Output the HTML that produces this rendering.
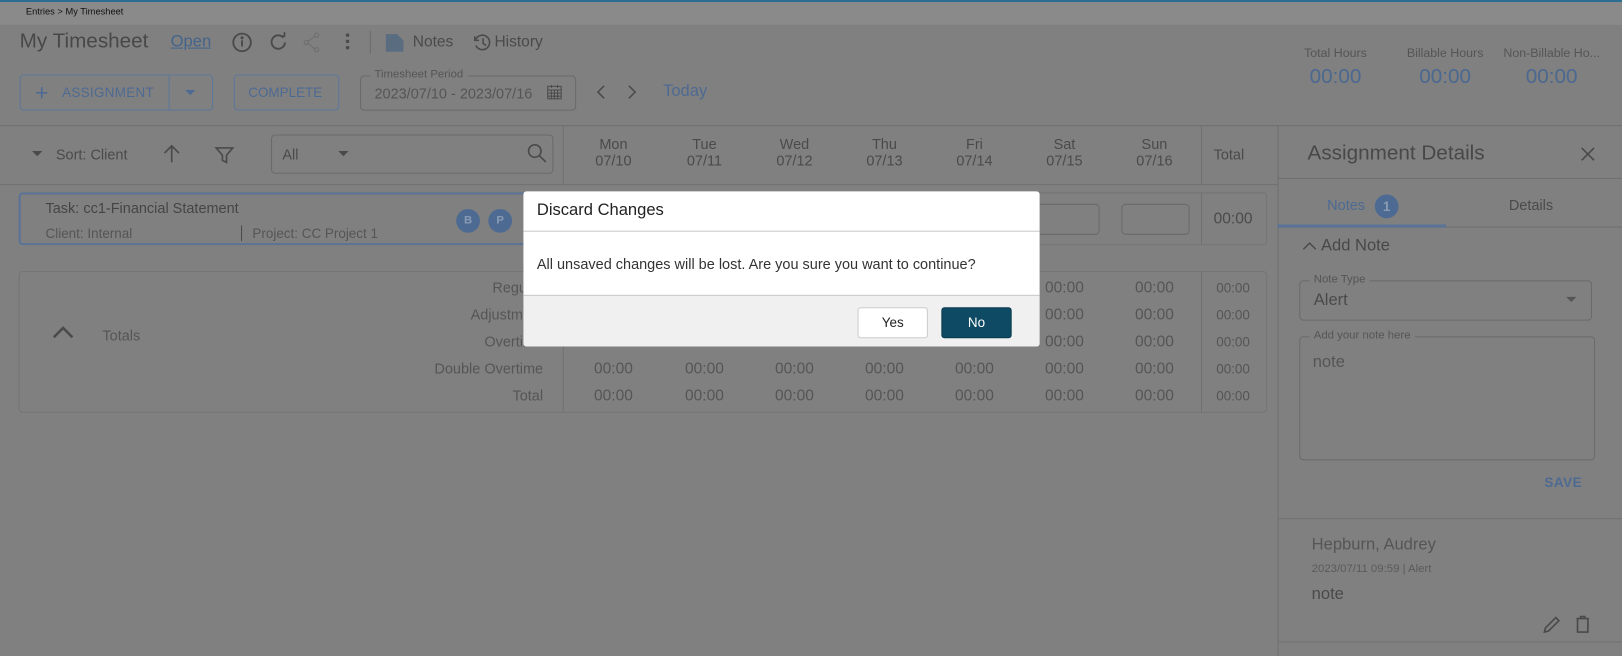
<!DOCTYPE html>
<html><head><meta charset="utf-8"><style>
html,body{margin:0;padding:0;width:1622px;height:656px;overflow:hidden;background:#808080}
#w{position:absolute;left:0;top:0;width:1568px;height:634px;transform:scale(1.03444);transform-origin:0 0;font-family:"Liberation Sans",sans-serif;color:#454545}
.a{position:absolute;white-space:nowrap}
.c{transform:translateX(-50%);text-align:center}
.r{transform:translateX(-100%)}
.box{position:absolute;border:1px solid #6a6a6a;border-radius:4px;box-sizing:border-box}
.hl{position:absolute;height:1px;background:#707070}
.vl{position:absolute;width:1px;background:#707070}
.d{font-size:14px;color:#4a4a4a}
.v{font-size:15px;color:#555}
</style></head><body><div id="w">
<div class="a" style="left:0;top:0;width:1568px;height:2px;background:#2b6e92"></div>
<div class="a" style="left:0;top:2px;width:1568px;height:22px;background:#8a8a8a"></div>
<div class="a" style="left:25px;top:6px;font-size:9px;color:#111">Entries &gt; My Timesheet</div>

<div class="a" style="left:19px;top:29px;font-size:20px;color:#484848">My Timesheet</div>
<div class="a" style="left:165px;top:32px;font-size:16px;color:#44648c;text-decoration:underline">Open</div>
<svg class="a" style="left:222px;top:30px" width="300" height="22" viewBox="0 0 300 22" fill="none" stroke="#4a4a4a" stroke-width="1.8">
<circle cx="12" cy="11" r="8.5"/><line x1="12" y1="9" x2="12" y2="15"/><circle cx="12" cy="6.5" r=".6" fill="#4a4a4a"/>
<path d="M52 6.5A6.5 6.5 0 1 0 53.5 11"/><path d="M49 5h4v-4" stroke-width="1.6"/>
<g stroke="#707070" stroke-width="1.2"><circle cx="84" cy="4" r="2"/><circle cx="74" cy="11" r="2"/><circle cx="84" cy="18" r="2"/><path d="M76 10l6-5M76 12l6 5"/></g>
<g fill="#4a4a4a" stroke="none"><circle cx="114" cy="4" r="1.7"/><circle cx="114" cy="10" r="1.7"/><circle cx="114" cy="16" r="1.7"/></g>
<line x1="136" y1="0" x2="136" y2="22" stroke="#6a6a6a" stroke-width="1"/>
<path d="M151 3h11l6 6v11h-17z" fill="#5a6c80" stroke="none"/>
<path d="M238 8a7 7 0 1 1 0 6M237 5v4h4M245 7v5l3 2" stroke-width="1.5"/>
</svg>
<div class="a" style="left:399px;top:32px;font-size:15px;color:#4a4a4a">Notes</div>
<div class="a" style="left:478px;top:32px;font-size:15px;color:#4a4a4a">History</div>

<div class="box" style="left:19px;top:72px;width:187px;height:35px;border-color:#5c779b"></div>
<div class="vl" style="left:163px;top:73px;height:33px;background:#5c779b"></div>
<div class="a" style="left:34px;top:77px;font-size:22px;color:#4d6a92">+</div>
<div class="a" style="left:60px;top:82px;font-size:13px;color:#4d6a92;letter-spacing:.3px">ASSIGNMENT</div>
<div class="a" style="left:179px;top:87px;border:5px solid transparent;border-top:5px solid #4d6a92"></div>
<div class="box" style="left:226px;top:72px;width:102px;height:35px;border-color:#5c779b"></div>
<div class="a" style="left:240px;top:82px;font-size:13px;color:#4d6a92">COMPLETE</div>
<div class="box" style="left:348px;top:73px;width:209px;height:34px"></div>
<div class="a" style="left:358px;top:66px;font-size:11px;color:#555;background:#808080;padding:0 4px">Timesheet Period</div>
<div class="a" style="left:362px;top:82px;font-size:14px;color:#555">2023/07/10 - 2023/07/16</div>
<svg class="a" style="left:528px;top:81px" width="16" height="16" fill="none" stroke="#4a4a4a" stroke-width="1"><rect x="1.5" y="2.5" width="13" height="12"/><path d="M1.5 6h13M1.5 9h13M1.5 12h13M5 6v9M8 6v9M11 6v9M5 1v3M11 1v3"/></svg>
<svg class="a" style="left:575px;top:81px" width="45" height="16" fill="none" stroke="#4a4a4a" stroke-width="1.5"><path d="M9 2l-6 6 6 6M33 2l6 6-6 6"/></svg>
<div class="a" style="left:641px;top:80px;font-size:16px;color:#4d6a92">Today</div>

<div class="a c" style="left:1291px;top:44px;font-size:12px;color:#555">Total Hours</div>
<div class="a c" style="left:1397px;top:44px;font-size:12px;color:#555">Billable Hours</div>
<div class="a c" style="left:1500px;top:44px;font-size:12px;color:#555">Non-Billable Ho...</div>
<div class="a c" style="left:1291px;top:63px;font-size:20px;color:#4a6890">00:00</div>
<div class="a c" style="left:1397px;top:63px;font-size:20px;color:#4a6890">00:00</div>
<div class="a c" style="left:1500px;top:63px;font-size:20px;color:#4a6890">00:00</div>

<div class="hl" style="left:0;top:121px;width:1568px"></div>
<div class="hl" style="left:0;top:178px;width:1235px"></div>
<div class="vl" style="left:1235px;top:121px;height:513px"></div>
<div class="vl" style="left:544px;top:121px;height:57px"></div>
<div class="vl" style="left:1161px;top:121px;height:57px"></div>
<div class="a" style="left:31px;top:146px;border:5px solid transparent;border-top:5px solid #4a4a4a"></div>
<div class="a" style="left:54px;top:141px;font-size:14px;color:#4a4a4a">Sort: Client</div>
<svg class="a" style="left:156px;top:138px" width="80" height="22" fill="none" stroke="#4a4a4a" stroke-width="1.6"><path d="M10 19V3M3 10l7-7 7 7"/><path d="M53 5h16l-6 7v7l-4-2v-5z"/></svg>
<div class="box" style="left:262px;top:130px;width:273px;height:38px"></div>
<div class="a" style="left:273px;top:141px;font-size:14px;color:#4a4a4a">All</div>
<div class="a" style="left:327px;top:146px;border:5px solid transparent;border-top:5px solid #4a4a4a"></div>
<svg class="a" style="left:509px;top:138px" width="20" height="20" fill="none" stroke="#4a4a4a" stroke-width="1.6"><circle cx="8" cy="8" r="6"/><path d="M12.5 12.5l6 6"/></svg>
<div class="a c d" style="left:593px;top:131px">Mon<br>07/10</div>
<div class="a c d" style="left:681px;top:131px">Tue<br>07/11</div>
<div class="a c d" style="left:768px;top:131px">Wed<br>07/12</div>
<div class="a c d" style="left:855px;top:131px">Thu<br>07/13</div>
<div class="a c d" style="left:942px;top:131px">Fri<br>07/14</div>
<div class="a c d" style="left:1029px;top:131px">Sat<br>07/15</div>
<div class="a c d" style="left:1116px;top:131px">Sun<br>07/16</div>
<div class="a c d" style="left:1188px;top:141px">Total</div>

<div class="box" style="left:18px;top:186px;width:1207px;height:51px;border-color:#747474"></div>
<div class="box" style="left:18px;top:186px;width:520px;height:51px;border:2px solid #5a7398;border-right:none;border-radius:4px 0 0 4px"></div>
<div class="vl" style="left:1161px;top:187px;height:49px"></div>
<div class="a" style="left:44px;top:193px;font-size:14px;color:#454545">Task: cc1-Financial Statement</div>
<div class="a" style="left:44px;top:218px;font-size:13px;color:#555">Client: Internal</div>
<div class="vl" style="left:233px;top:218px;height:15px;background:#4a4a4a"></div>
<div class="a" style="left:244px;top:218px;font-size:13px;color:#555">Project: CC Project 1</div>
<div class="a" style="left:441px;top:202px;width:23px;height:23px;border-radius:50%;background:#4d6a92;color:#8a9bb5;font-size:11px;font-weight:bold;text-align:center;line-height:23px">B</div>
<div class="a" style="left:472px;top:202px;width:23px;height:23px;border-radius:50%;background:#4d6a92;color:#8a9bb5;font-size:11px;font-weight:bold;text-align:center;line-height:23px">P</div>
<div class="box" style="left:996px;top:197px;width:67px;height:30px"></div>
<div class="box" style="left:1084px;top:197px;width:66px;height:30px"></div>
<div class="a c" style="left:1192px;top:203px;font-size:15px;color:#4a4a4a">00:00</div>

<div class="box" style="left:18px;top:262px;width:1207px;height:137px;border-color:#747474"></div>
<div class="vl" style="left:544px;top:263px;height:135px"></div>
<div class="vl" style="left:1161px;top:263px;height:135px"></div>
<svg class="a" style="left:50px;top:314px" width="22" height="14" fill="none" stroke="#4a4a4a" stroke-width="2.5"><path d="M2 12l9-9 9 9"/></svg>
<div class="a" style="left:99px;top:316px;font-size:14px;color:#555">Totals</div>
<div class="a r" style="left:525px;top:270px;font-size:14px;color:#555">Regular</div>
<div class="a r" style="left:525px;top:296px;font-size:14px;color:#555">Adjustment</div>
<div class="a r" style="left:525px;top:322px;font-size:14px;color:#555">Overtime</div>
<div class="a r" style="left:525px;top:348px;font-size:14px;color:#555">Double Overtime</div>
<div class="a r" style="left:525px;top:374px;font-size:14px;color:#555">Total</div>
<div id="vals"></div>

<div class="a" style="left:1264px;top:137px;font-size:20px;color:#484848">Assignment Details</div>
<svg class="a" style="left:1527px;top:141px" width="16" height="16" stroke="#4a4a4a" stroke-width="1.6"><path d="M2 2l12 12M14 2L2 14"/></svg>
<div class="hl" style="left:1235px;top:172px;width:333px"></div>
<div class="a" style="left:1283px;top:190px;font-size:14px;color:#4d6a92">Notes</div>
<div class="a" style="left:1329px;top:188px;width:23px;height:23px;border-radius:50%;background:#4d6a92;color:#8a9bb5;font-size:13px;font-weight:bold;text-align:center;line-height:23px">1</div>
<div class="a c" style="left:1480px;top:190px;font-size:14px;color:#4a4a4a">Details</div>
<div class="hl" style="left:1235px;top:219px;width:333px"></div>
<div class="a" style="left:1235px;top:217px;width:163px;height:3px;background:#5a7398"></div>
<svg class="a" style="left:1259px;top:233px" width="14" height="10" fill="none" stroke="#4a4a4a" stroke-width="1.4"><path d="M1 8l6-6 6 6"/></svg>
<div class="a" style="left:1277px;top:229px;font-size:16px;color:#484848">Add Note</div>
<div class="box" style="left:1256px;top:271px;width:283px;height:39px"></div>
<div class="a" style="left:1266px;top:264px;font-size:11px;color:#555;background:#808080;padding:0 4px">Note Type</div>
<div class="a" style="left:1270px;top:282px;font-size:16px;color:#4a4a4a">Alert</div>
<div class="a" style="left:1514px;top:287px;border:5px solid transparent;border-top:5px solid #555"></div>
<div class="box" style="left:1256px;top:325px;width:286px;height:120px"></div>
<div class="a" style="left:1266px;top:318px;font-size:11px;color:#555;background:#808080;padding:0 4px">Add your note here</div>
<div class="a" style="left:1269px;top:342px;font-size:16px;color:#555">note</div>
<div class="a" style="left:1493px;top:459px;font-size:13px;font-weight:bold;color:#4d6a92;letter-spacing:.5px">SAVE</div>
<div class="hl" style="left:1235px;top:501px;width:333px"></div>
<div class="a" style="left:1268px;top:518px;font-size:16px;color:#555">Hepburn, Audrey</div>
<div class="a" style="left:1268px;top:544px;font-size:11px;color:#5a5a5a">2023/07/11 09:59 | Alert</div>
<div class="a" style="left:1268px;top:566px;font-size:16px;color:#4a4a4a">note</div>
<svg class="a" style="left:1490px;top:593px" width="50" height="20" fill="none" stroke="#4a4a4a" stroke-width="1.6"><path d="M3 18l1-4 10-10 3 3-10 10z"/><path d="M34 5h12M38 5V3h4v2M35 5v13h10V5"/></svg>
<div class="hl" style="left:1235px;top:620px;width:333px"></div>

<div class="a" style="left:506px;top:185px;width:499px;height:150px;background:#fff;border-radius:3px;overflow:hidden">
<div class="a" style="left:13px;top:10px;font-size:16px;color:#222">Discard Changes</div>
<div class="a" style="left:0;top:38px;width:499px;height:1px;background:#c8c8c8"></div>
<div class="a" style="left:13px;top:62px;font-size:14px;color:#333">All unsaved changes will be lost. Are you sure you want to continue?</div>
<div class="a" style="left:0;top:100px;width:499px;height:50px;background:#f0f0f0;border-top:1px solid #c8c8c8"></div>
<div class="a" style="left:323px;top:112px;width:66px;height:28px;background:#fff;border:1px solid #ccc;border-radius:3px;font-size:13px;color:#222;text-align:center;line-height:28px">Yes</div>
<div class="a" style="left:404px;top:112px;width:66px;height:28px;background:#0e4a63;border:1px solid #0a3a50;border-radius:3px;font-size:13px;color:#fff;text-align:center;line-height:28px">No</div>
</div>
</div>
<script>
var xs=[593,681,768,855,942,1029,1116],ys=[270,296,322,348,374],h='';
ys.forEach(function(y){xs.forEach(function(x){h+='<div class="a c v" style="left:'+x+'px;top:'+y+'px">00:00</div>'});h+='<div class="a c" style="left:1192px;top:'+(y+1)+'px;font-size:13px;color:#555">00:00</div>'});
document.getElementById('vals').outerHTML=h;
</script>
</body></html>
